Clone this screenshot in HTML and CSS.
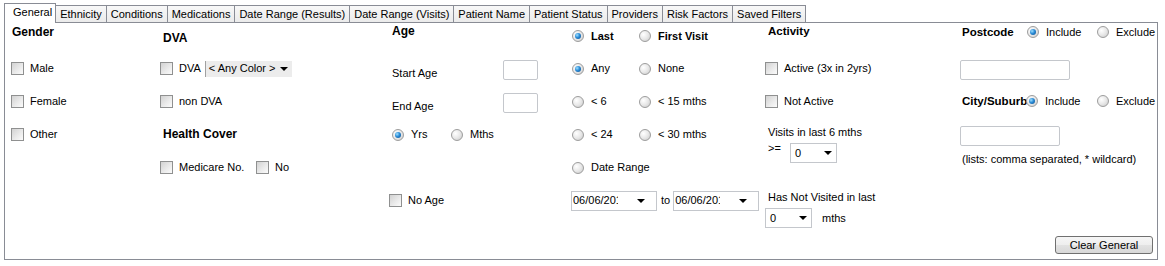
FILE: index.html
```html
<!DOCTYPE html>
<html lang="en">
<head>
    <meta charset="UTF-8">
    <title>Patient Filter - General</title>
    <link rel="stylesheet" href="styles.css">
</head>
<body>
    <div class="tabs">
        <div class="tab active">General</div>
        <div class="tab">Ethnicity</div>
        <div class="tab">Conditions</div>
        <div class="tab">Medications</div>
        <div class="tab">Date Range (Results)</div>
        <div class="tab">Date Range (Visits)</div>
        <div class="tab">Patient Name</div>
        <div class="tab">Patient Status</div>
        <div class="tab">Providers</div>
        <div class="tab">Risk Factors</div>
        <div class="tab">Saved Filters</div>
    </div>
    <div class="panel">
        <div class="columns">
            <div class="col col-gender">
                <div class="head head-gender">Gender</div>
                <div class="row"><span class="chk"></span><span class="lbl">Male</span></div>
                <div class="row"><span class="chk"></span><span class="lbl">Female</span></div>
                <div class="row"><span class="chk"></span><span class="lbl">Other</span></div>
            </div>

            <div class="col col-dva">
                <div class="head head-dva">DVA</div>
                <div class="row">
                    <span class="chk"></span><span class="lbl">DVA</span>
                    <div class="color-select">&lt; Any Color &gt;<span class="arrow"></span></div>
                </div>
                <div class="row"><span class="chk"></span><span class="lbl">non DVA</span></div>
                <div class="row sub-head">Health Cover</div>
                <div class="row">
                    <span class="opt w96"><span class="chk"></span><span class="lbl">Medicare No.</span></span>
                    <span class="chk"></span><span class="lbl">No</span>
                </div>
            </div>

            <div class="col col-age">
                <div class="head head-age">Age</div>
                <div class="row"><span class="field-lbl">Start Age</span><span class="textbox tb-age"></span></div>
                <div class="row"><span class="field-lbl">End Age</span><span class="textbox tb-age"></span></div>
                <div class="row units-row">
                    <span class="opt w59"><span class="rad on"></span><span class="lbl">Yrs</span></span>
                    <span class="rad"></span><span class="lbl">Mths</span>
                </div>
                <div class="row"></div>
                <div class="row"><span class="chk"></span><span class="lbl">No Age</span></div>
            </div>

            <div class="col col-last">
                <div class="head head-last">
                    <span class="opt w67"><span class="rad on"></span><span class="lbl">Last</span></span>
                    <span class="rad"></span><span class="lbl">First Visit</span>
                </div>
                <div class="row">
                    <span class="opt w67"><span class="rad on"></span><span class="lbl">Any</span></span>
                    <span class="rad"></span><span class="lbl">None</span>
                </div>
                <div class="row">
                    <span class="opt w67"><span class="rad"></span><span class="lbl">&lt; 6</span></span>
                    <span class="rad"></span><span class="lbl">&lt; 15 mths</span>
                </div>
                <div class="row">
                    <span class="opt w67"><span class="rad"></span><span class="lbl">&lt; 24</span></span>
                    <span class="rad"></span><span class="lbl">&lt; 30 mths</span>
                </div>
                <div class="row"><span class="rad"></span><span class="lbl">Date Range</span></div>
                <div class="row date-row">
                    <div class="date-box"><span class="date-text">06/06/2017</span><span class="arrow"></span></div>
                    <span class="to">to</span>
                    <div class="date-box"><span class="date-text">06/06/2017</span><span class="arrow"></span></div>
                </div>
            </div>

            <div class="col col-activity">
                <div class="head head-activity">Activity</div>
                <div class="row"><span class="chk"></span><span class="lbl">Active (3x in 2yrs)</span></div>
                <div class="row"><span class="chk"></span><span class="lbl">Not Active</span></div>
                <div class="act-note visits-note">Visits in last 6 mths</div>
                <div class="visits-row">
                    <span class="ge">&gt;=</span>
                    <div class="combo">0<span class="arrow"></span></div>
                </div>
                <div class="act-note lapsed-note">Has Not Visited in last</div>
                <div class="lapsed-row">
                    <div class="combo">0<span class="arrow"></span></div>
                    <span class="lbl">mths</span>
                </div>
            </div>

            <div class="col col-postcode">
                <div class="head head-postcode">
                    <span class="pc-label">Postcode</span>
                    <span class="opt w70"><span class="rad on"></span><span class="lbl">Include</span></span>
                    <span class="rad"></span><span class="lbl">Exclude</span>
                </div>
                <span class="textbox tb-post"></span>
                <div class="city-row">
                    <span class="city-label">City/Suburb</span>
                    <span class="opt w71"><span class="rad on"></span><span class="lbl">Include</span></span>
                    <span class="rad"></span><span class="lbl">Exclude</span>
                </div>
                <span class="textbox tb-city"></span>
                <div class="hint">(lists: comma separated, * wildcard)</div>
            </div>
        </div>
        <div class="footer">
            <button class="clear-btn">Clear General</button>
        </div>
    </div>
</body>
</html>
```

FILE: styles.css
```css
body {
    margin: 0;
    background: #fff;
    font-family: "Liberation Sans", Arial, sans-serif;
    font-size: 11px;
    line-height: 13px;
    color: #000;
}

/* tab strip */
.tabs {
    display: flex;
    align-items: flex-end;
    height: 22px;
    padding-left: 4px;
    position: relative;
    z-index: 1;
}
.tab {
    height: 17px;
    box-sizing: border-box;
    padding: 0 4px;
    margin-left: -1px;
    border: 1px solid #898c95;
    border-bottom: none;
    background: linear-gradient(#f8f8f8, #ebebeb);
    display: flex;
    align-items: center;
    white-space: nowrap;
}
.tab.active {
    height: 20px;
    margin-left: 0;
    margin-bottom: -1px;
    padding: 0 3px 2px 8px;
    background: #fff;
}

/* main panel */
.panel {
    margin-left: 4px;
    width: 1154px;
    height: 238px;
    box-sizing: border-box;
    border: 1px solid #898c95;
    display: flex;
    flex-direction: column;
}
.columns {
    display: flex;
    padding-left: 6px;
}
.col {
    display: flex;
    flex-direction: column;
    flex: none;
}
.col-gender { width: 149px; }
.col-dva { width: 229px; }
.col-age { width: 181px; }
.col-last { width: 195px; }
.col-activity { width: 195px; }
.col-postcode { flex: 1; }

.head {
    height: 29px;
    box-sizing: border-box;
    display: flex;
    align-items: center;
    font-weight: bold;
    font-size: 12px;
    white-space: nowrap;
}
.head-gender { padding: 0 0 10px 1px; }
.head-dva { padding: 1px 0 0 3px; }
.head-age { padding: 0 0 13px 3px; }
.head-last { padding: 0 0 3px 2px; font-size: 11px; }
.head-activity { padding: 0 0 13px 3px; font-size: 11.5px; }
.head-postcode { padding: 0 0 11px 0; font-size: 11px; }
.head-postcode .lbl { font-weight: normal; }

.row {
    height: 33px;
    display: flex;
    align-items: center;
    white-space: nowrap;
}
.sub-head {
    font-weight: bold;
    font-size: 12px;
    padding-left: 3px;
}
.opt {
    display: flex;
    align-items: center;
    flex: none;
}
.w59 { width: 59px; }
.w67 { width: 67px; }
.w70 { width: 70px; }
.w71 { width: 71px; }
.w96 { width: 96px; }

/* check boxes and radio buttons */
.chk {
    flex: none;
    width: 13px;
    height: 13px;
    box-sizing: border-box;
    border: 1px solid #8f9090;
    background: linear-gradient(135deg, #d2d2d2 0%, #ececec 60%, #fbfbfb 100%);
}
.rad {
    flex: none;
    position: relative;
    width: 12px;
    height: 12px;
    box-sizing: border-box;
    border-radius: 50%;
    border: 1px solid #9d9d9d;
    background: radial-gradient(circle at 35% 35%, #fff 0%, #e8e8e8 50%, #c6c6c6 100%);
}
.rad.on::after {
    content: "";
    position: absolute;
    left: 2px;
    top: 2px;
    width: 6px;
    height: 6px;
    border-radius: 50%;
    background: radial-gradient(circle at 35% 35%, #9ee0ff 0%, #2b8bd6 45%, #0a4a88 100%);
}
.lbl { margin-left: 6px; }
.rad + .lbl { margin-left: 7px; }

.arrow {
    flex: none;
    width: 0;
    height: 0;
    border-left: 4px solid transparent;
    border-right: 4px solid transparent;
    border-top: 4px solid #000;
}

/* DVA colour picker */
.color-select {
    margin-left: 4px;
    width: 87px;
    height: 16px;
    box-sizing: border-box;
    background: #ececec;
    border-left: 1px solid #a0a0a0;
    padding: 0 4px 0 3px;
    display: flex;
    align-items: center;
    justify-content: space-between;
}

/* text inputs */
.textbox {
    display: block;
    flex: none;
    height: 20px;
    box-sizing: border-box;
    border: 1px solid #c4c7cc;
    border-radius: 2px;
    background: #fff;
}
.field-lbl {
    width: 111px;
    margin: 9px 0 0 3px;
}
.tb-age {
    width: 35px;
    margin-top: 3px;
}
.units-row { padding-left: 3px; }

/* last visit column */
.col-last .row { padding-left: 2px; }
.col-last .date-row { padding-left: 1px; }
.date-box {
    width: 86px;
    height: 20px;
    box-sizing: border-box;
    border: 1px solid #c4c7cc;
    padding-left: 1px;
    display: flex;
    align-items: center;
    background: #fff;
}
.date-text {
    width: 45px;
    overflow: hidden;
    white-space: nowrap;
}
.date-box .arrow { margin-left: 19px; }
.to { margin: 0 3px 0 4px; }

/* activity column */
.act-note { padding-left: 3px; white-space: nowrap; }
.visits-note { margin-top: 8px; }
.visits-row {
    display: flex;
    align-items: flex-start;
    margin-top: 4px;
    padding-left: 3px;
}
.ge { width: 22px; margin-top: -1px; }
.combo {
    width: 47px;
    height: 20px;
    box-sizing: border-box;
    border: 1px solid #c4c7cc;
    padding: 0 4px 0 4px;
    display: flex;
    align-items: center;
    justify-content: space-between;
    background: #fff;
}
.lapsed-note { margin-top: 28px; }
.lapsed-row {
    display: flex;
    align-items: center;
    margin-top: 4px;
}
.lapsed-row .lbl { margin-left: 10px; }

/* postcode column */
.pc-label {
    width: 67px;
    padding-left: 2px;
    box-sizing: border-box;
    font-size: 11.5px;
}
.tb-post {
    width: 110px;
    margin-top: 8px;
}
.city-row {
    display: flex;
    align-items: center;
    height: 18px;
    margin-top: 12px;
    white-space: nowrap;
}
.city-label {
    width: 66px;
    flex: none;
    padding-left: 2px;
    box-sizing: border-box;
    font-weight: bold;
    font-size: 11.5px;
}
.tb-city {
    width: 100px;
    margin-top: 16px;
}
.hint {
    margin-top: 7px;
    padding-left: 2px;
    white-space: nowrap;
}

/* footer button */
.footer {
    margin-top: auto;
    display: flex;
    justify-content: flex-end;
    padding: 0 4px 5px 0;
}
.clear-btn {
    width: 98px;
    height: 18px;
    padding: 0;
    font-family: inherit;
    font-size: 11px;
    color: #000;
    border: 1px solid #707070;
    border-radius: 3px;
    background: linear-gradient(#f6f6f6 0%, #eeeeee 50%, #e2e2e2 51%, #d8d8d8 100%);
}
```
